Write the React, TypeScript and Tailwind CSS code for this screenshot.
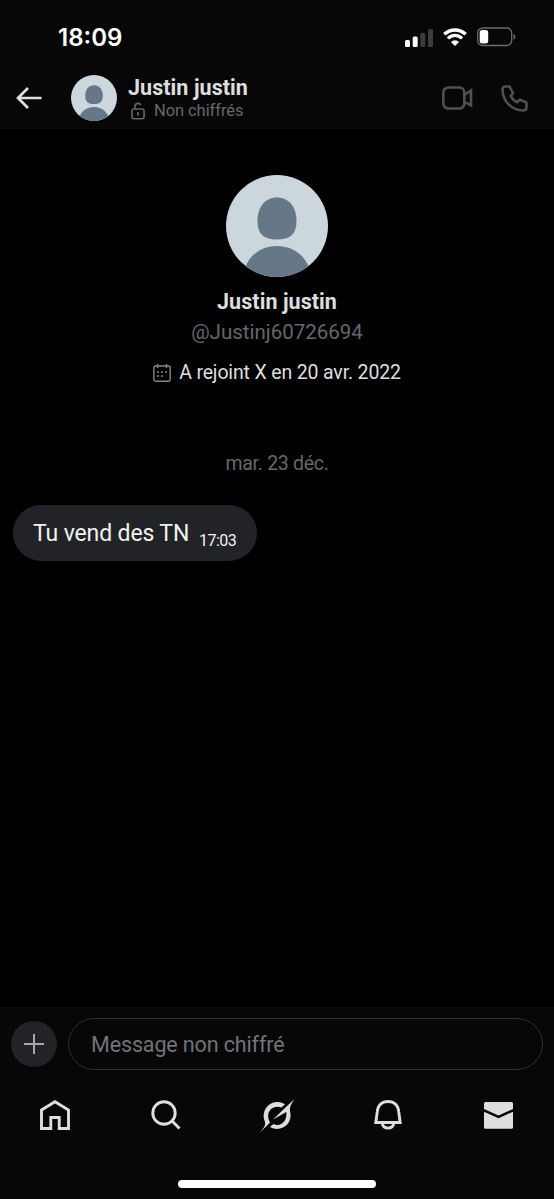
import type { ReactNode } from "react";

const Avatar = ({ className }: { className: string }) => (
  <svg viewBox="0 0 102 102" className={`${className} shrink-0 rounded-full`}>
    <rect width="102" height="102" fill="#ccd6dd" />
    <path
      d="M51 22.500C63 22.500 70.500 32 70.500 46C70.500 59.500 64 64.500 51 64.500S31.500 59.500 31.500 46C31.500 32 39 22.500 51 22.500Z"
      fill="#667788"
    />
    <path d="M17 102C19 82 34 71 51 71S83 82 85 102Z" fill="#667788" />
  </svg>
);

const StatusBar = () => (
  <div className="flex h-[67px] items-start justify-between pl-[58px] pr-[38px]">
    <span className="mt-[23px] font-[Inter] text-[24px] leading-[30px] font-semibold tracking-[0px] text-white">
      18:09
    </span>
    <div className="mt-[27px] flex items-center gap-[10px]">
      <svg width="28" height="19" viewBox="0 0 28 19">
        <rect x="0" y="12" width="5" height="7" rx="1.500" fill="#fff" />
        <rect x="7.700" y="8.500" width="5" height="10.500" rx="1.500" fill="#fff" />
        <rect x="15.300" y="5" width="5" height="14" rx="1.500" fill="#3c3c3c" />
        <rect x="23" y="1" width="5" height="18" rx="1.500" fill="#3c3c3c" />
      </svg>
      <svg width="24" height="18" viewBox="0 0 24 18" fill="none" stroke="#fff">
        <path d="M1.300 6.300A15.500 15.500 0 0 1 22.700 6.300" strokeWidth="3.600" />
        <path d="M5 10.500A9.500 9.500 0 0 1 19 10.500" strokeWidth="3.200" />
        <path d="M8 13.900A5.700 5.700 0 0 1 16 13.900L12 18Z" fill="#fff" stroke="none" />
      </svg>
      <svg width="39" height="20" viewBox="0 0 39 20">
        <rect x="0.700" y="1" width="34" height="17.500" rx="5" fill="none" stroke="#6b6b6b" strokeWidth="1.300" />
        <rect x="2.700" y="3" width="8.500" height="13.500" rx="2.500" fill="#fff" />
        <path d="M36.500 7C38.800 7.500 38.800 12 36.500 12.700Z" fill="#6b6b6b" />
      </svg>
    </div>
  </div>
);

const Header = () => (
  <header className="flex h-[62px] items-center pr-[26px] pl-4">
    <svg width="26" height="22" viewBox="0 0 26 22" fill="none" stroke="#dedede" strokeWidth="2.700">
      <path d="M25.500 11H2M12 1L2 11L12 21" />
    </svg>
    <Avatar className="ml-[29px] h-[46px] w-[46px]" />
    <div className="ml-[11px] pt-px">
      <h1 className="text-[21.500px] leading-[25px] font-bold tracking-[0.060px]">Justin justin</h1>
      <div className="flex items-center gap-[9px] pl-[3px] text-[#66676b]">
        <svg width="14" height="18" viewBox="0 0 14 18" fill="none" stroke="currentColor" strokeWidth="1.600">
          <rect x="0.900" y="7" width="12.200" height="9.700" rx="2.200" />
          <path d="M4 7V4.200A3 3 0 0 1 9.800 3.300M7 10V13.500" />
        </svg>
        <span className="text-[16.500px] leading-[22px] tracking-[-0.080px]">Non chiffrés</span>
      </div>
    </div>
    <div className="ml-auto flex items-center gap-[28px] text-[#505050]">
      <svg width="31" height="24" viewBox="0 0 31 24" fill="none" stroke="currentColor" strokeWidth="2.600">
        <rect x="1.300" y="1.500" width="21" height="21" rx="5" />
        <path d="M22.300 9L29 4.500V19.500L22.300 15.500" />
      </svg>
      <svg width="27" height="27" viewBox="0 0 27 27" fill="none" stroke="currentColor" strokeWidth="2.600" strokeLinejoin="round">
        <path d="M3.800 1.500H8.500L12 8L9.800 11C11 13.800 13 15.800 16 17.200L18.800 14.800L25.500 17.500V22.500C25.500 24.500 24 25.500 22 25.500C10.500 25 2 16.500 1.500 5C1.500 3 2.300 1.500 3.800 1.500Z" />
      </svg>
    </div>
  </header>
);

const Profile = () => (
  <section className="flex flex-col items-center pt-[46px]">
    <Avatar className="h-[102px] w-[102px]" />
    <h2 className="mt-[11px] text-[21.500px] leading-[28px] font-bold tracking-[0.060px]">Justin justin</h2>
    <p className="mt-px text-[20.500px] leading-[30px] text-[#66676b]">@Justinj60726694</p>
    <div className="mt-[12px] flex items-center gap-[8px]">
      <svg width="18" height="18" viewBox="0 0 18 18" fill="none" stroke="#85868a" strokeWidth="1.400">
        <rect x="0.800" y="2" width="16.400" height="15.200" rx="2" />
        <path d="M4.500 0V4M13.500 0V4" />
        <path d="M8 8H10M12 8H14M4 8H6M4 12H6M8 12H10" strokeWidth="1.700" />
      </svg>
      <span className="text-[19.500px] leading-[28px] tracking-[-0.150px]">A rejoint X en 20 avr. 2022</span>
    </div>
  </section>
);

const Tab = ({ children }: { children: ReactNode }) => (
  <button className="flex h-9 flex-1 items-center justify-center text-[#dedede]">{children}</button>
);

const TabBar = () => (
  <nav className="mt-[27px] flex">
    <Tab>
      <svg width="30" height="31" viewBox="0 0 30 31" fill="none" stroke="currentColor" strokeWidth="2.900">
        <path d="M1.500 10L15 1.700L28.500 10V28.500H19.200V17.500H10.800V28.500H1.500Z" />
      </svg>
    </Tab>
    <Tab>
      <svg width="30" height="30" viewBox="0 0 30 30" fill="none" stroke="currentColor" strokeWidth="2.900">
        <circle cx="13" cy="13" r="11.200" />
        <path d="M20.800 20.800L28.500 28.500" />
      </svg>
    </Tab>
    <Tab>
      <svg width="36" height="35" viewBox="0 0 36 35" fill="currentColor">
        <path d="M14 21.500L27.500 8.500L35.500 1C31 7.500 30.500 10 31.200 14C34 26 22 35 10.800 29L14.500 26C21.500 29.200 28.500 23.500 27.300 14Z" />
        <path d="M1 34.500C5 29.500 7 27 5.800 23.500C0.500 11 14 -1 26 6.300L22.500 9.600C13.500 6 5.500 14.500 11 24.500Z" />
      </svg>
    </Tab>
    <Tab>
      <svg width="28" height="30" viewBox="0 0 28 30" fill="none" stroke="currentColor" strokeWidth="2.900">
        <path d="M3.300 11.500C3.900 5.300 8 1.500 14 1.500S24.100 5.300 24.700 11.500L26.200 22.500H1.800Z" />
        <path d="M8.200 23C9.200 29.800 18.800 29.800 19.800 23" />
      </svg>
    </Tab>
    <Tab>
      <svg width="29" height="27" viewBox="0 0 29 27" fill="currentColor">
        <path d="M1.500 0H27.500Q29 0 29 1.500V7L14.500 13.500L0 7V1.500Q0 0 1.500 0Z" />
        <path d="M0 9.700L14.500 16.200L29 9.700V25.300Q29 26.800 27.500 26.800H1.500Q0 26.800 0 25.300Z" />
      </svg>
    </Tab>
  </nav>
);

export default function App() {
  return (
    <div className="flex h-[1199px] w-[554px] flex-col bg-black font-[Roboto,sans-serif] text-[#dedede]">
      <div className="bg-[#070707]">
        <StatusBar />
        <Header />
      </div>

      <main className="flex-1">
        <Profile />
        <p className="mt-[63px] text-center text-[19.500px] leading-[28px] tracking-[-0.3px] text-[#66676b]">
          mar. 23 déc.
        </p>
        <div className="mt-[27px] ml-[13px] flex h-[56px] w-[244px] items-center rounded-full bg-[#212327] pt-[2px] pl-5 text-[#f2f2f2]">
          <span className="w-[156px] text-[23px] leading-[30px] tracking-[-0.130px] whitespace-nowrap">
            Tu vend des TN
          </span>
          <span className="mt-[14px] ml-[10px] text-[16px] leading-5 tracking-[-0.5px]">17:03</span>
        </div>
      </main>

      <footer className="h-[192px] bg-[#070707] pt-[11px]">
        <div className="flex items-center gap-[11px] pr-[11px] pl-[11px]">
          <button className="flex h-[46px] w-[46px] items-center justify-center rounded-full bg-[#212327]">
            <svg width="20" height="20" viewBox="0 0 20 20" stroke="#a6a7aa" strokeWidth="2">
              <path d="M10 0V20M0 10H20" />
            </svg>
          </button>
          <div className="flex h-[52px] flex-1 items-center rounded-full border border-[#303030] pt-[2px] pl-[22px] text-[21.500px] tracking-[-0.130px] text-[#727377]">
            Message non chiffré
          </div>
        </div>
        <TabBar />
        <div className="mx-auto mt-[47px] h-2 w-[198px] rounded-full bg-white" />
      </footer>
    </div>
  );
}
